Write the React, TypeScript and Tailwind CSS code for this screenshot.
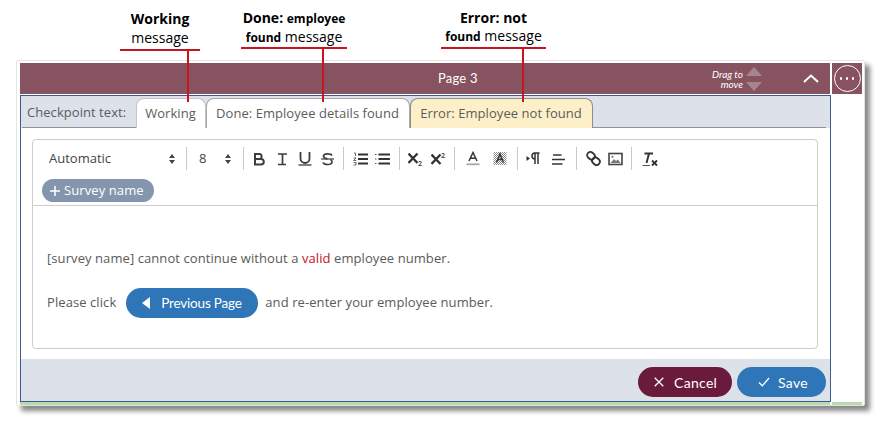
import React from "react";

const Icon = ({ w = 16, h = 16, children }: { w?: number; h?: number; children: React.ReactNode }) => (
  <svg width={w} height={h} viewBox={`0 0 ${w} ${h}`} fill="none" className="block shrink-0">
    {children}
  </svg>
);

const UpDown = () => (
  <Icon w={8} h={12}>
    <path d="M4 1 L7 5 H1 Z M4 11 L7 7 H1 Z" fill="#444" />
  </Icon>
);

const Sep = ({ ml, mr }: { ml: string; mr: string }) => <div className={`h-[23px] w-px bg-[#c9c9c9] shrink-0 ${ml} ${mr}`} />;

const Note = ({ left, width, lineTop, stemLeft, children }: { left: string; width: string; lineTop: string; stemLeft: string; children: React.ReactNode }) => (
  <div className={`absolute top-0 ${left} ${width} h-[102px] z-10`}>
    <div className="absolute inset-x-0 top-[9px] text-center text-black font-['Open_Sans',sans-serif] text-[14px] leading-[19px]">{children}</div>
    <div className={`absolute inset-x-0 ${lineTop} h-[1.5px] bg-[#c8141e]`} />
    <div className={`absolute ${stemLeft} ${lineTop} bottom-0 w-[1.5px] bg-[#c8141e]`} />
  </div>
);

export default function App() {
  return (
    <div className="relative w-[886px] h-[424px] bg-white overflow-hidden pt-[60px] pl-[16px] font-['Open_Sans',sans-serif]">
      <Note left="left-[120px]" width="w-[80px]" lineTop="top-[49px]" stemLeft="left-[67px]">
        <div className="font-bold">Working</div>
        <div>message</div>
      </Note>
      <Note left="left-[241px]" width="w-[106px]" lineTop="top-[47px]" stemLeft="left-[81px]">
        <div className="font-bold -mt-[1px]">Done: <span className="text-[12px]">employee</span></div>
        <div className="-mt-[1px]"><span className="font-bold text-[12px]">found</span> message</div>
      </Note>
      <Note left="left-[441px]" width="w-[105px]" lineTop="top-[47px]" stemLeft="left-[81px]">
        <div className="font-bold -mt-[1px]">Error: not</div>
        <div className="-mt-[1px]"><span className="font-bold text-[12px]">found</span> message</div>
      </Note>

      <div className="w-[849px] h-[346px] bg-white border border-[#e4e4e4] rounded-[2px] shadow-[5px_5px_5px_#888888] pt-[2px] pl-[3px] pr-[2px] flex flex-col">
        <div className="flex h-[31px] shrink-0 gap-[2px]">
          <div className="w-[811px] bg-[#875361] flex items-center text-white">
            <div className="ml-[418px] w-[60px] text-[13px] font-['Lato',sans-serif] tracking-[0.2px]">Page 3</div>
            <div className="ml-[191px] w-[54px] text-right text-[10px] leading-[10px] italic font-['Lato',sans-serif]">
              <div>Drag to</div>
              <div>move</div>
            </div>
            <div className="ml-[3px] flex flex-col gap-[6px]">
              <Icon w={16} h={9}><path d="M8 0 L16 9 H0 Z" fill="#a78590" /></Icon>
              <Icon w={16} h={9}><path d="M8 9 L16 0 H0 Z" fill="#a78590" /></Icon>
            </div>
            <div className="ml-[41px]">
              <Icon w={16} h={9}><path d="M1 8 L8 1.5 L15 8" stroke="white" strokeWidth="2" /></Icon>
            </div>
          </div>
          <div className="w-[30px] bg-[#875361] flex items-center justify-center">
            <div className="w-[27px] h-[27px] rounded-full border border-white flex items-center justify-center gap-[3.5px]">
              <div className="w-[2.5px] h-[2.5px] bg-white rounded-full" />
              <div className="w-[2.5px] h-[2.5px] bg-white rounded-full" />
              <div className="w-[2.5px] h-[2.5px] bg-white rounded-full" />
            </div>
          </div>
        </div>

        <div className="mt-[1px] w-[811px] h-[307px] shrink-0 border border-[#3c5a8e] border-b-[1.5px] flex flex-col bg-white">
          <div className="h-[32px] shrink-0 bg-[#dde1ea] flex items-end pl-[6px] text-[13px] text-[#5c5c5c] tracking-[0.05px] relative">
            <div className="absolute left-[1px] right-[4px] bottom-0 h-px bg-[#8f929a]" />
            <div className="w-[109px] h-[31px] flex items-center">Checkpoint text:</div>
            <div className="relative w-[70px] h-[30px] bg-white rounded-t-[8px] border border-b-0 border-[#c4c4c4] flex items-center justify-center pr-[1px]">Working</div>
            <div className="relative w-[204px] h-[30px] bg-white rounded-t-[8px] border border-[#a9a9a9] border-b-0 flex items-center justify-center pr-[1px]">Done: Employee details found</div>
            <div className="relative w-[183px] h-[30px] bg-[#fdf0c8] rounded-t-[8px] border border-[#8e8e8e] border-b-0 flex items-center justify-center pr-[1px]">Error: Employee not found</div>
          </div>

          <div className="flex-1 pl-[11px] pr-[12px] pt-[11px]">
            <div className="h-[210px] border border-[#cdcdcd] rounded-[4px] flex flex-col">
              <div className="h-[66px] border-b border-[#cdcdcd] shrink-0 px-[9px] pt-[7px] text-[#333]">
                <div className="flex items-center h-[23px] text-[13px]">
                  <div className="w-[7px]" />
                  <div className="w-[119px] text-[#444] pt-[1px]">Automatic</div>
                  <UpDown />
                  <Sep ml="ml-[10px]" mr="mr-[12px]" />
                  <div className="w-[25px] text-[#444] pt-[1px]">8</div>
                  <UpDown />
                  <Sep ml="ml-[11px]" mr="mr-[8px]" />
                  <Icon w={14} h={14}>
                    <path d="M3 2 H8 A2.7 2.7 0 0 1 8 7 H3 Z M3 7 H9 A2.8 2.8 0 0 1 9 12.6 H3 Z" stroke="#3d3d3d" strokeWidth="2" />
                  </Icon>
                  <div className="w-[10px]" />
                  <Icon w={12} h={14}>
                    <path d="M2 2 H11 M2 12.5 H10 M6.5 2 V12.5" stroke="#3d3d3d" strokeWidth="1.7" />
                  </Icon>
                  <div className="w-[10px]" />
                  <Icon w={14} h={15}>
                    <path d="M2.5 1 V7.5 A4.5 4.5 0 0 0 11.5 7.5 V1" stroke="#3d3d3d" strokeWidth="1.8" />
                    <path d="M0.5 14 H13.5" stroke="#3d3d3d" strokeWidth="1.3" />
                  </Icon>
                  <div className="w-[9px]" />
                  <Icon w={13} h={14}>
                    <path d="M11 3.5 C10 1.5 3 0.8 2.5 4 C2.2 6 5 6.6 6.5 7 M2 10.5 C3 13 10.5 13.5 11 10 C11.1 9 10.5 8 9.5 7.5" stroke="#3d3d3d" strokeWidth="1.7" />
                    <path d="M0 7 H13" stroke="#3d3d3d" strokeWidth="1.2" />
                  </Icon>
                  <Sep ml="ml-[9px]" mr="mr-[9px]" />
                  <Icon w={15} h={14}>
                    <path d="M5 2.5 H15 M5 7 H15 M5 11.5 H15" stroke="#333" strokeWidth="2" />
                    <path d="M1 1 H2.5 V4 M0.5 6 H3 L0.7 8.5 H3.2 M0.5 10.5 H3 V13 H0.5" stroke="#444" strokeWidth="0.8" />
                  </Icon>
                  <div className="w-[7px]" />
                  <Icon w={15} h={14}>
                    <path d="M3.5 2.5 H15 M3.5 7 H15 M3.5 11.5 H15" stroke="#333" strokeWidth="2" />
                    <path d="M0 2.5 H2 M0 7 H2 M0 11.5 H2" stroke="#555" strokeWidth="1.2" strokeDasharray="1 0.5" />
                  </Icon>
                  <Sep ml="ml-[9px]" mr="mr-[8px]" />
                  <Icon w={15} h={19}>
                    <path d="M0.5 4.5 L9.5 14 M9.5 4.5 L0.5 14" stroke="#333" strokeWidth="2.3" />
                    <text x="10" y="16.5" fontSize="7" fontWeight="700" fill="#555">2</text>
                  </Icon>
                  <div className="w-[8px]" />
                  <Icon w={15} h={19}>
                    <path d="M0.5 5.5 L9.5 15 M9.5 5.5 L0.5 15" stroke="#333" strokeWidth="2.3" />
                    <text x="10" y="8.5" fontSize="7" fontWeight="700" fill="#555">2</text>
                  </Icon>
                  <Sep ml="ml-[8px]" mr="mr-[11px]" />
                  <Icon w={14} h={15}>
                    <path d="M3 10 L7 1.5 L11 10 M4.5 7.2 H9.5" stroke="#333" strokeWidth="1.5" />
                    <path d="M0.5 13.3 H13.5" stroke="#a8a8a8" strokeWidth="1.8" />
                  </Icon>
                  <div className="w-[13px]" />
                  <Icon w={14} h={15}>
                    <defs>
                      <pattern id="dither" width="2" height="2" patternUnits="userSpaceOnUse">
                        <rect width="1" height="1" fill="#8a8a8a" />
                        <rect x="1" y="1" width="1" height="1" fill="#8a8a8a" />
                      </pattern>
                    </defs>
                    <rect x="0.5" y="1" width="13" height="13" fill="url(#dither)" />
                    <path d="M3.5 11.5 L7 3 L10.5 11.5 M5 8.5 H9" stroke="#333" strokeWidth="1.5" />
                  </Icon>
                  <Sep ml="ml-[10px]" mr="mr-[8px]" />
                  <Icon w={14} h={15}>
                    <path d="M0.5 5 L4 7.5 L0.5 10 Z" fill="#333" />
                    <path d="M8 2 H13.5 M9 2 V13 M12 2 V13 M9 2 A3 3 0 0 0 9 8" stroke="#333" strokeWidth="1.5" />
                  </Icon>
                  <div className="w-[12px]" />
                  <Icon w={13} h={14}>
                    <path d="M1 3 H9.5 M0 7.5 H13 M0 12 H10.5" stroke="#333" strokeWidth="1.7" />
                  </Icon>
                  <Sep ml="ml-[11px]" mr="mr-[9px]" />
                  <Icon w={15} h={15}>
                    <rect x="1" y="1.5" width="8" height="6.5" rx="3.2" transform="rotate(40 5 4.7)" stroke="#333" strokeWidth="1.8" />
                    <rect x="6" y="7" width="8" height="6.5" rx="3.2" transform="rotate(40 10 10.2)" stroke="#333" strokeWidth="1.8" />
                  </Icon>
                  <div className="w-[7px]" />
                  <Icon w={15} h={14}>
                    <rect x="1" y="1.5" width="13" height="11" stroke="#444" strokeWidth="1.6" />
                    <path d="M2.5 11 L6 7 L8 9 L10 7.5 L12.5 11 Z" fill="#777" />
                    <circle cx="4.5" cy="4.8" r="1.1" fill="#777" />
                  </Icon>
                  <Sep ml="ml-[8px]" mr="mr-[10px]" />
                  <Icon w={16} h={16}>
                    <path d="M2.5 2.5 H11 M7 2.5 L4.5 12" stroke="#333" strokeWidth="1.9" />
                    <path d="M0.5 14.5 H8" stroke="#555" strokeWidth="1" />
                    <path d="M10 9.5 L15 14.5 M15 9.5 L10 14.5" stroke="#333" strokeWidth="1.8" />
                  </Icon>
                </div>
                <div className="mt-[9px] w-[112px] h-[23px] rounded-full bg-[#8496ae] text-white text-[13px] flex items-center pl-[7px] gap-[3px] tracking-[0.1px]">
                  <Icon w={12} h={12}><path d="M6 1 V11 M1 6 H11" stroke="white" strokeWidth="1.5" /></Icon>
                  <span>Survey name</span>
                </div>
              </div>

              <div className="pl-[14px] text-[13px] text-[#5a5a5a] tracking-[0.08px]">
                <div className="mt-[43px] leading-[18px]">
                  [survey name] cannot continue without a <span className="text-[#c0141e]">valid</span> employee number.
                </div>
                <div className="mt-[21px] flex items-center h-[30px]">
                  <span>Please click</span>
                  <div className="ml-[10px] mr-[7px] w-[132px] h-[30px] rounded-full bg-[#2f76b8] text-white flex items-center pl-[16px] gap-[11px] font-['Lato',sans-serif] text-[13.5px] tracking-[-0.2px]">
                    <Icon w={8} h={12}><path d="M0 6 L8 0 V12 Z" fill="white" /></Icon>
                    <span>Previous Page</span>
                  </div>
                  <span>and re-enter your employee number.</span>
                </div>
              </div>
            </div>
          </div>

          <div className="h-[42px] shrink-0 bg-[#dde1ea] flex justify-end items-start pt-[8px] pr-[4px] gap-[5px] text-white font-['Lato',sans-serif] text-[14px] tracking-[0.3px]">
            <div className="w-[94px] h-[30px] rounded-full bg-[#6a1a3a] flex items-center pl-[16px] gap-[10px]">
              <Icon w={10} h={10}><path d="M0.7 0.7 L9.3 9.3 M9.3 0.7 L0.7 9.3" stroke="white" strokeWidth="1.3" /></Icon>
              <span>Cancel</span>
            </div>
            <div className="w-[89px] h-[30px] rounded-full bg-[#2f76b8] flex items-center pl-[21px] gap-[8px]">
              <Icon w={12} h={10}><path d="M1 5.5 L4.3 8.8 L11 1" stroke="white" strokeWidth="1.3" /></Icon>
              <span>Save</span>
            </div>
          </div>
        </div>
        <div className="flex h-[3px] shrink-0 gap-[2px]">
          <div className="w-[811px] bg-[#b9dbab]" />
          <div className="w-[30px] bg-[#b9dbab]" />
        </div>
      </div>
    </div>
  );
}
